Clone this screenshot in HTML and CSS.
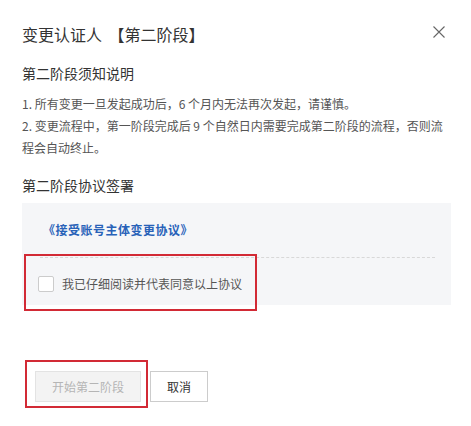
FILE: index.html
```html
<!DOCTYPE html>
<html lang="zh-CN">
<head>
<meta charset="utf-8">
<title>变更认证人</title>
<link rel="stylesheet" href="styles.css">
</head>
<body>
<div class="dialog">
  <header class="dlg-head">
    <h2 class="dlg-title">变更认证人 【第二阶段】</h2>
    <button class="dlg-close" aria-label="关闭">
      <svg width="12" height="12" viewBox="0 0 12 12"><path d="M0.5 0.5 L11.5 11.5 M11.5 0.5 L0.5 11.5" stroke="#666" stroke-width="1.1" fill="none"/></svg>
    </button>
  </header>

  <h3 class="sec-title">第二阶段须知说明</h3>
  <div class="notes">
    <p>1. 所有变更一旦发起成功后，6 个月内无法再次发起，请谨慎。</p>
    <p>2. 变更流程中，第一阶段完成后 9 个自然日内需要完成第二阶段的流程，否则流程会自动终止。</p>
  </div>

  <h3 class="sec-title sign-title">第二阶段协议签署</h3>
  <div class="agree-box">
    <a class="agree-link" href="#">《接受账号主体变更协议》</a>
    <div class="divider"></div>
    <label class="agree-check"><span class="cb"></span><span>我已仔细阅读并代表同意以上协议</span></label>
    <div class="mark mark-check"></div>
  </div>

  <div class="actions">
    <button class="btn btn-primary" disabled>开始第二阶段</button>
    <button class="btn btn-default">取消</button>
    <div class="mark mark-btn"></div>
  </div>
</div>
</body>
</html>
```
FILE: styles.css
```css
* { box-sizing: border-box; }
html, body { margin: 0; padding: 0; background: #fff; }
body {
  font-family: "Noto Sans CJK SC", "Noto Sans", sans-serif;
  color: #333;
}
.dialog {
  width: 471px;
  height: 426px;
  padding: 22px 20px 0 22px;
}
.dlg-head {
  display: flex;
  align-items: center;
  justify-content: space-between;
  height: 24px;
}
.dlg-title {
  margin: 0;
  font-size: 16px;
  font-weight: normal;
  line-height: 24px;
  color: #333;
  word-spacing: 3px;
}
.dlg-close {
  border: 0;
  background: none;
  padding: 0;
  width: 12px;
  height: 12px;
  margin-right: 6px;
  margin-top: -4px;
  display: flex;
}
.sec-title {
  margin: 17px 0 0;
  font-size: 14px;
  font-weight: normal;
  line-height: 20px;
  color: #333;
}
.notes {
  margin-top: 10px;
  font-size: 12px;
  line-height: 22px;
  color: #555;
}
.notes p { margin: 0; }
.sign-title { margin-top: 16px; }
.agree-box {
  position: relative;
  margin-top: 8px;
  background: #f5f6f8;
  padding: 17px 16px 0 17px;
  height: 102px;
}
.agree-link {
  display: block;
  font-size: 12px;
  font-weight: bold;
  letter-spacing: 0.5px;
  line-height: 20px;
  color: #2862b8;
  text-decoration: none;
  margin-left: 4px;
}
.divider {
  margin-top: 17px;
  border-top: 1px dashed #d8d8d8;
  margin-left: 1px;
}
.agree-check {
  display: flex;
  align-items: center;
  gap: 8px;
  margin-top: 18px;
  margin-left: -1px;
  font-size: 12px;
  line-height: 16px;
  color: #555;
}
.cb {
  width: 16px;
  height: 16px;
  border: 1px solid #ccc;
  border-radius: 2px;
  background: #fff;
}
.mark {
  position: absolute;
  border: 2px solid #d22a35;
  pointer-events: none;
}
.mark-check {
  left: 2px;
  top: 51px;
  width: 233px;
  height: 57px;
}
.actions {
  position: relative;
  display: flex;
  gap: 9px;
  margin-top: 66px;
  padding-left: 13px;
}
.btn {
  height: 31px;
  padding: 0 16px;
  font-family: inherit;
  font-size: 12px;
  border-radius: 0;
  border: 1px solid #ccc;
  background: #fff;
  color: #333;
}
.btn-primary {
  width: 106px;
  background: #f3f3f3;
  border-color: #e3e3e3;
  color: #b5b5b5;
}
.btn-default { width: 58px; }
.mark-btn {
  left: 3px;
  top: -11px;
  width: 123px;
  height: 48px;
}
```
